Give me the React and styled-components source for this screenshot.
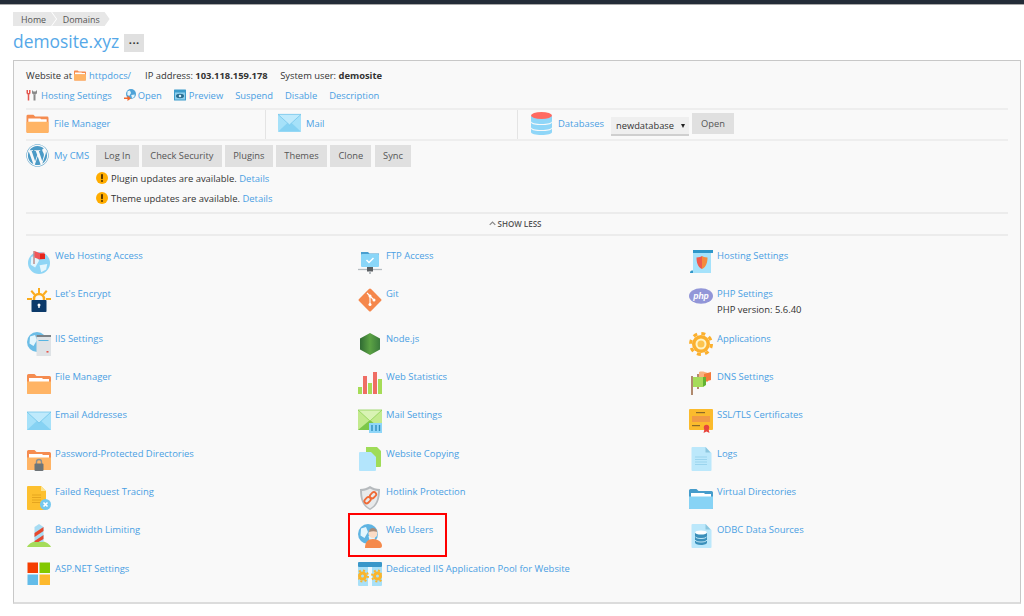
import React from "react";
import styled, { createGlobalStyle } from "styled-components";
import { FaWordpress } from "react-icons/fa";

const Global = createGlobalStyle`
  html, body { margin: 0; padding: 0; background: #fff; }
  body { font-family: "Open Sans", "Liberation Sans", sans-serif; font-size: 9.45px; color: #333; }
  * { box-sizing: border-box; }
`;

const TopBar = styled.div`height: 5px; background: #232c38; border-bottom: 1px solid #a9a9a9;`;
const Page = styled.div`padding: 7px 3px 15px 13px;`;
const Crumbs = styled.nav`display: flex; height: 14px;`;
const Crumb = styled.a`
  display: flex; align-items: center; height: 14px; background: #e7e7e7; color: #555; font-size: 8.9px;
  padding: 0 10px 0 ${p => (p.$first ? "8px" : "10.7px")};
  margin-left: ${p => (p.$first ? "0" : "-4px")};
  clip-path: ${p => p.$first
    ? "polygon(0 0, calc(100% - 5px) 0, 100% 50%, calc(100% - 5px) 100%, 0 100%)"
    : "polygon(0 0, calc(100% - 5px) 0, 100% 50%, calc(100% - 5px) 100%, 0 100%, 5px 50%)"};
`;
const TitleRow = styled.div`display: flex; align-items: center; gap: 5px; height: 26px; margin-top: 2px; margin-bottom: 6px;`;
const Title = styled.h1`margin: 0; font-size: 17.4px; font-weight: 400; line-height: 26px; color: #55a8e8;`;
const MoreButton = styled.button`
  width: 20px; height: 18px; margin-top: 3px; padding: 0; border: 0; background: #e0e0e0; color: #333;
  font: 700 11px/17px "Open Sans", sans-serif; letter-spacing: .4px;
`;
const Panel = styled.section`
  width: 1008px; border: 1px solid #c8c8c8; border-bottom: 2px solid #dcdcdc; background: #f9f9f9; padding: 6px 12px 1px;
`;
const InfoRow = styled.div`display: flex; align-items: center; height: 16px; font-size: 9.4px;`;
const InfoItem = styled.span`display: inline-flex; align-items: center; margin-right: ${p => p.$mr || 12.5}px; white-space: pre;`;
const FolderSlot = styled.span`display: inline-flex; margin: 0 3px 0 2px;`;
const Strong = styled.b`font-weight: 700; color: #333;`;
const Link = styled.a`color: #4a9fe3; white-space: nowrap;`;
const LinksRow = styled.div`display: flex; align-items: center; gap: 12px; height: 20px; margin-top: 2px; margin-bottom: 2.5px; font-size: 9.38px;`;
const IconLink = styled.span`display: inline-flex; align-items: center; gap: ${p => p.$gap || 3}px;`;
const Toolbar = styled.div`
  display: grid; grid-template-columns: 240px 252px 1fr; height: 33.5px;
  border-top: 2px solid #eeeeee; border-bottom: 2px solid #eeeeee;
`;
const ToolCell = styled.div`
  display: flex; align-items: center; gap: ${p => (p.$last ? 6 : 5)}px; padding: 0 0 2px ${p => (p.$first ? "0" : p.$last ? "13px" : "12px")};
  border-right: ${p => (p.$last ? "0" : "1px solid #e4e4e4")};
`;
const DbSelect = styled.div`
  display: flex; align-items: center; justify-content: space-between; width: 78px; height: 19px; margin: 7px -3px 0 1px; padding: 0 4px 0 5px;
  background: #efefef; border-bottom: 2px solid #cfcfcf; color: #333; font-size: 9.3px;
`;
const Arrow = styled.span`width: 0; height: 0; border-left: 2.5px solid transparent; border-right: 2.5px solid transparent; border-top: 4px solid #222;`;
const Button = styled.button`
  height: 21.5px; padding: 0 ${p => p.$pad || 8.2}px; border: 0; background: #e0e0e0; color: #555;
  font: 400 9.3px "Open Sans", sans-serif; white-space: nowrap;
`;
const CmsRow = styled.div`display: flex; gap: 7px; padding-top: 3px; height: 71px;`;
const CmsHead = styled.div`display: flex; gap: 5px; width: 63px;`;
const CmsLabel = styled.div`margin-top: 5px; line-height: 14px; white-space: nowrap;`;
const CmsBody = styled.div`display: flex; flex-direction: column;`;
const ButtonRow = styled.div`display: flex; gap: 3.5px; margin-top: 1px;`;
const Notice = styled.div`display: flex; align-items: center; gap: 3px; height: 14px; margin-top: ${p => (p.$first ? "4.5px" : "6px")}; white-space: pre;`;
const ShowLess = styled.div`
  display: flex; align-items: center; justify-content: center; gap: 2px; height: 23.5px; padding-right: 4px;
  border-top: 2px solid #ececec; border-bottom: 2px solid #ececec;
  font-size: 8px; font-weight: 600; color: #555; text-transform: uppercase;
`;
const Grid = styled.div`
  display: grid; grid-template-columns: 331px 331px 1fr; padding: 14px 0 0 1px;
`;
const Item = styled.div`position: relative; display: flex; gap: 4px; padding-bottom: 14.35px;`;
const ItemText = styled.div`line-height: 14px; margin-top: -0.5px;`;
const ItemNote = styled.div`margin: 2px 0 .5px; color: #333;`;
const Highlight = styled.div`
  position: absolute; left: -10px; top: -11px; width: 99px; height: 44px; border: 2px solid #f00; pointer-events: none;
`;
const Svg = styled.svg`display: block; flex: none;`;

const Ic = ({ s = 24, w, h, vb = "0 0 24 24", children }) => (
  <Svg width={w || s} height={h || s} viewBox={vb}>{children}</Svg>
);

const FolderArt = ({ back = "#f58c50", front = "#ffb465", children }) => (
  <>
    <path d="M0 4.500a1.500 1.500 0 0 1 1.500-1.500h6l2 2h13a1.500 1.500 0 0 1 1.500 1.500v15a1.500 1.500 0 0 1-1.500 1.500h-21A1.500 1.500 0 0 1 0 21.500z" fill={back} />
    <path d="M2 7h13l1 1h6v3H2z" fill="#fff" />
    <path d="M0 10.500h24v11a1.500 1.500 0 0 1-1.500 1.500h-21A1.500 1.500 0 0 1 0 21.500z" fill={front} />
    {children}
  </>
);
const Globe = ({ cx = 12, cy = 12, r = 11.5, fill = "#8fd5f5", land = "#e4f6fd" }) => (
  <>
    <circle cx={cx} cy={cy} r={r} fill={fill} />
    <path d={`M${cx - r * 0.7} ${cy - r * 0.55}l${r * 0.5} ${-r * 0.15}l${r * 0.2} ${r * 0.5}l${-r * 0.35} ${r * 0.6}l${-r * 0.4} ${-r * 0.25}z M${cx + r * 0.05} ${cy + r * 0.2}l${r * 0.7} ${-r * 0.1}l${-r * 0.1} ${r * 0.5}l${-r * 0.45} ${r * 0.25}z`} fill={land} />
  </>
);
const DocArt = ({ fill = "#bce8fb", fold = "#8cc6de", x = 2.5, w = 19 }) => (
  <>
    <path d={`M${x + 1} 0h${w - 6}l6 6v${17}a1 1 0 0 1-1 1H${x + 1}a1 1 0 0 1-1-1V1a1 1 0 0 1 1-1z`} fill={fill} />
    <path d={`M${x + w - 5} 0l5 5.500h-5z`} fill={fold} />
  </>
);

const MailArt = () => (
  <>
    <rect y="3" width="24" height="18" fill="#a6e1f9" />
    <path d="M0 21l12-11 12 11z" fill="#86d2f3" />
    <path d="M0 3l12 11L24 3z" fill="#bfeafc" stroke="#74c6ea" strokeWidth=".8" />
  </>
);

const I = {
  folder: <Ic><FolderArt /></Ic>,
  folderTop: <Ic w={23} h={22}><FolderArt /></Ic>,
  folderSmall: <Ic w={12} h={12}><FolderArt /></Ic>,
  mail: <Ic w={23} h={20} vb="0 2 24 20"><MailArt /></Ic>,
  mailGrid: <Ic><MailArt /></Ic>,
  db: (
    <Ic w={21} h={23} vb="0 0 21 23">
      <path d="M0 4h21v5c0 2-4.500 3-10.500 3S0 11 0 9z" fill="#8fd6f8" />
      <path d="M0 10.500c1 2 5 2.500 10.500 2.500S20 12.500 21 10.500V15c0 2-4.500 3-10.500 3S0 17 0 15z" fill="#8fd6f8" />
      <path d="M0 16.500c1 2 5 2.500 10.500 2.500S20 18.500 21 16.500V20c0 2-4.500 3-10.500 3S0 22 0 20z" fill="#8fd6f8" />
      <ellipse cx="10.500" cy="3.500" rx="10.500" ry="3.500" fill="#ff6a61" />
    </Ic>
  ),
  warn: (
    <Ic s={12}>
      <circle cx="12" cy="12" r="12" fill="#ffad00" />
      <rect x="10" y="4" width="4" height="10.500" rx="1.500" fill="#5b3a00" />
      <circle cx="12" cy="18" r="2.200" fill="#5b3a00" />
    </Ic>
  ),
  tools: (
    <Ic s={12}>
      <path d="M5 10v13M2.500 2v6c0 2 5 2 5 0V2" fill="none" stroke="#e4574f" strokeWidth="3" />
      <path d="M17 11v12" stroke="#8a8a8a" strokeWidth="4" />
      <path d="M12 2v5c0 3 2 4 5 4s5-1 5-4V2l-3 3h-4z" fill="#8a8a8a" />
    </Ic>
  ),
  open: (
    <Ic s={12}>
      <Globe cx={14} cy={10} r={10} fill="#4fa3d8" />
      <path d="M0 17h7v-4l7 6-7 5v-4H0z" fill="#f4682c" />
    </Ic>
  ),
  preview: (
    <Ic s={12}>
      <rect y="1" width="24" height="22" rx="1" fill="#3d9ccb" />
      <rect x="2" y="7" width="20" height="14" fill="#8fd0ee" />
      <ellipse cx="12" cy="14" rx="8" ry="4.500" fill="#2b6d8f" />
      <circle cx="12" cy="14" r="2.500" fill="#d9f2fc" />
    </Ic>
  ),
  hostAccess: (
    <Ic>
      <Globe cy={13} r={11} />
      <path d="M7 1v13" stroke="#b98a86" strokeWidth="1.400" />
      <path d="M7.500 1l5 2 5-.5v6.500l-5 .5-5-2z" fill="#f0575a" />
      <path d="M13 4h5v5h-5z" fill="#e5261c" />
    </Ic>
  ),
  encrypt: (
    <Ic>
      <path d="M11 0h2v5h-2zM3.500 3.500l1.500-1.500 3.500 4-1.500 1.500zM20.500 3.500L19 2l-3.500 4 1.500 1.500zM0 10h5v2H0zM19 10h5v2h-5z" fill="#fbab1c" />
      <path d="M7 13V11a5 5 0 0 1 10 0v2" fill="none" stroke="#fbab1c" strokeWidth="2.500" />
      <rect x="4.500" y="12" width="15" height="12" rx=".8" fill="#0c3a6a" />
      <circle cx="12" cy="17" r="1.500" fill="#fff" />
      <rect x="11.300" y="17" width="1.400" height="3" fill="#fff" />
    </Ic>
  ),
  iis: (
    <Ic>
      <Globe cx={10} cy={10} r={10} fill="#6cbde6" />
      <rect x="9.500" y="3" width="14.500" height="21" fill="#dfe3e6" />
      <rect x="9.500" y="3" width="14.500" height="2" fill="#7b8186" />
      <rect x="11.500" y="8" width="10" height="1" fill="#57b5e2" />
      <rect x="19.500" y="19" width="2" height="1.600" fill="#e8564c" />
    </Ic>
  ),
  ftp: (
    <Ic>
      <path d="M3 2h7l1.500 1.500H21v2H3z" fill="#4a9fd0" />
      <rect x="3" y="4" width="18" height="13" rx="1" fill="#8ad6f8" />
      <path d="M8.500 10l2.500 2.500L15.500 8" fill="none" stroke="#fff" strokeWidth="1.500" />
      <path d="M0 19.500h24" stroke="#b5bcc0" strokeWidth="1.300" />
      <rect x="9" y="17" width="6" height="4.500" fill="#5b5f62" />
      <rect x="11" y="21.500" width="2" height="2.500" fill="#b5bcc0" />
    </Ic>
  ),
  git: (
    <Ic>
      <rect x="3.500" y="3.500" width="17" height="17" rx="1.500" transform="rotate(45 12 12)" fill="#f5874b" />
      <path d="M9 5l6 6M12 8v8.500M12 8l4 4" fill="none" stroke="#fff" strokeWidth="1.100" />
      <circle cx="12" cy="8" r="1.500" fill="#fff" /><circle cx="12" cy="16.500" r="1.500" fill="#fff" /><circle cx="16" cy="12" r="1.500" fill="#fff" />
    </Ic>
  ),
  node: (
    <Ic>
      <defs>
        <linearGradient id="n" x1="0" x2="1"><stop offset="0" stopColor="#2f6a33" /><stop offset=".5" stopColor="#5ca344" /><stop offset="1" stopColor="#3a7a3c" /></linearGradient>
      </defs>
      <path d="M12 1l10 5.500v11L12 23 2 17.500v-11z" fill="url(#n)" />
    </Ic>
  ),
  stats: (
    <Ic>
      <rect y="16" width="4" height="7" fill="#a6dc57" />
      <rect x="5" y="5" width="4" height="18" fill="#ef6d64" />
      <rect x="10" y="12" width="4" height="11" fill="#a6dc57" />
      <rect x="15" y="1" width="4" height="22" fill="#ef6d64" />
      <rect x="20" y="8" width="4" height="15" fill="#a6dc57" />
    </Ic>
  ),
  hostingDoc: (
    <Ic>
      <rect x="4" y="1" width="18" height="22" fill="#a5e2fb" />
      <rect x="4" y="0" width="20" height="3" fill="#2f97c9" />
      <path d="M1 23c0-2 1-2.500 3-2.500V23z" fill="#2f97c9" />
      <path d="M7.500 7.500c3 0 4.500-1 5.500-1.500v13C9 17 7.500 13 7.500 7.500z" fill="#f05a4c" />
      <path d="M13 6c1 .5 2.500 1.500 5.500 1.500 0 5.500-1.500 9.500-5.500 11.500z" fill="#f58a3c" />
    </Ic>
  ),
  php: (
    <Ic h={16} w={24} vb="0 0 24 16">
      <ellipse cx="12" cy="8" rx="12" ry="7.800" fill="#9296d8" />
      <text x="12" y="11" textAnchor="middle" fontFamily="Liberation Sans, sans-serif" fontStyle="italic" fontWeight="700" fontSize="8.500" fill="#fff">php</text>
    </Ic>
  ),
  apps: (
    <Ic>
      <circle cx="12" cy="12" r="9" fill="#fbb02e" />
      <circle cx="12" cy="12" r="10.500" fill="none" stroke="#fbb02e" strokeWidth="3" strokeDasharray="4 4.250" />
      <circle cx="12" cy="12" r="5.500" fill="#fff3c4" />
      <circle cx="12" cy="12" r="3.500" fill="#fdc44e" />
    </Ic>
  ),
  dns: (
    <Ic>
      <rect x="2" y="5" width="2" height="19" fill="#b08a6e" />
      <rect x="8" y="3" width="2" height="15" fill="#b08a6e" />
      <path d="M10 1c3-1 6 0 9 1v9c-3-1-6-1-9 0z" fill="#f9b27f" />
      <path d="M15 3l7-2v8l-7 2z" fill="#f47a3a" />
      <path d="M4 6h10v10H4z" fill="#a5dc5a" />
      <path d="M14 6h3v8l-3 2z" fill="#62b233" />
    </Ic>
  ),
  ssl: (
    <Ic>
      <rect width="24" height="21" rx="1" fill="#fbbb2d" />
      <rect x="3" y="7" width="18" height="6" fill="#f19a44" />
      <rect x="7" y="3" width="9" height="1.200" fill="#8a6a2a" />
      <rect x="3" y="16" width="8" height="1.200" fill="#8a6a2a" />
      <circle cx="17.500" cy="18.500" r="2.700" fill="#e8453c" />
      <path d="M15.500 20l-1 4 3-1.500 3 1.500-1-4z" fill="#e8453c" />
    </Ic>
  ),
  logs: (
    <Ic>
      <DocArt />
      <path d="M6 10h12M6 12.500h12M6 15h12M6 17.500h12" stroke="#9ad4ee" strokeWidth="1.100" />
    </Ic>
  ),
  copying: (
    <Ic>
      <path d="M8 0h11l4 4v15a1 1 0 0 1-1 1H8z" fill="#9fdc58" />
      <path d="M2 5h11l5 5v13a1 1 0 0 1-1 1H2a1 1 0 0 1-1-1V6a1 1 0 0 1 1-1z" fill="#b3e5fc" />
    </Ic>
  ),
  passFolder: (
    <Ic>
      <FolderArt>
        <path d="M9.500 17v-2a2.500 2.500 0 0 1 5 0v2" fill="none" stroke="#8a8f93" strokeWidth="1.400" />
        <rect x="7.500" y="16.500" width="9" height="7.500" rx="1" fill="#6e7478" />
      </FolderArt>
    </Ic>
  ),
  hotlink: (
    <Ic>
      <path d="M12 0c3 2 6 3 10 3 0 10-2 17-10 21C4 20 2 13 2 3c4 0 7-1 10-3z" fill="#b6babd" />
      <path d="M12 2.500c2.500 1.500 5 2.500 8 2.500 0 8-2 14-8 17.500C6 19 4 13 4 5c3 0 5.500-1 8-2.500z" fill="#e8eaeb" />
      <g fill="none" stroke="#ef6a35" strokeWidth="1.800">
        <rect x="6" y="12" width="7" height="4.500" rx="2.200" transform="rotate(-45 9.500 14.200)" />
        <rect x="11.500" y="7" width="7" height="4.500" rx="2.200" transform="rotate(-45 15 9.200)" />
      </g>
    </Ic>
  ),
  failed: (
    <Ic>
      <path d="M1 0h13l5 5v18a1 1 0 0 1-1 1H1a1 1 0 0 1-1-1V1a1 1 0 0 1 1-1z" fill="#fdc02f" />
      <path d="M14 0l5 5h-5z" fill="#fde38a" />
      <path d="M5 9h9M5 11.500h9M5 14h9M5 16.500h9" stroke="#e5a51f" strokeWidth="1.100" />
      <circle cx="18.500" cy="18.500" r="5.500" fill="#74c8ef" />
      <path d="M16.500 16.500l4 4M20.500 16.500l-4 4" stroke="#fff" strokeWidth="1.600" />
    </Ic>
  ),
  bandwidth: (
    <Ic>
      <path d="M0 23c2-4 7-6 12-6s10 2 12 6z" fill="#a5dc5a" />
      <path d="M12 0l4.500 3v15h-9V3z" fill="#a7dcf3" />
      <path d="M7.500 9l9-6v4l-9 6zM7.500 17l9-6v4l-5 3h-4z" fill="#e5492f" />
    </Ic>
  ),
  vdir: <Ic><FolderArt back="#469ccb" front="#87d3f5" /></Ic>,
  webUsers: (
    <Ic>
      <Globe cx={10} cy={10} r={10} fill="#5fb4e2" />
      <circle cx="15" cy="9.500" r="4.500" fill="#fbdcc6" />
      <path d="M11 8c0-3 2-4 4-4s4 1 4 4c-2-1-5-1-8 0z" fill="#a98a76" />
      <path d="M7 24c0-6 3-9 8-9s9 3 9 7c0 1-1 2-2 2z" fill="#f58a4c" />
    </Ic>
  ),
  odbc: (
    <Ic>
      <DocArt />
      <path d="M6 8.500h12v10c0 1.500-2.500 2.500-6 2.500s-6-1-6-2.500z" fill="#3b90bb" />
      <ellipse cx="12" cy="8.500" rx="6" ry="2" fill="#fff" />
      <path d="M6 12.500c1 1.500 3 2 6 2s5-.5 6-2M6 16c1 1.500 3 2 6 2s5-.5 6-2" fill="none" stroke="#cdeefb" strokeWidth=".9" />
    </Ic>
  ),
  asp: (
    <Ic>
      <rect x=".500" y=".500" width="10.500" height="10.500" fill="#f53d00" />
      <rect x="12.500" y=".500" width="10.500" height="10.500" fill="#83c800" />
      <rect x=".500" y="12.500" width="10.500" height="10.500" fill="#63bce9" />
      <rect x="12.500" y="12.500" width="10.500" height="10.500" fill="#fdb92e" />
    </Ic>
  ),
  pool: (
    <Ic>
      <rect y="4" width="24" height="20" rx="1" fill="#a8e0f8" />
      <rect y="0" width="24" height="5" rx="1" fill="#3a97c9" />
      <rect x="10" y="5" width="4" height="19" fill="#eef9fe" />
      <circle cx="4.500" cy="14" r="3" fill="none" stroke="#fbb52b" strokeWidth="3" />
      <circle cx="19.500" cy="14" r="3" fill="none" stroke="#fbb52b" strokeWidth="3" />
      <circle cx="4.500" cy="14" r="5.500" fill="none" stroke="#fbb52b" strokeWidth="2" strokeDasharray="2 2.300" />
      <circle cx="19.500" cy="14" r="5.500" fill="none" stroke="#fbb52b" strokeWidth="2" strokeDasharray="2 2.300" />
    </Ic>
  ),
  mailSettings: (
    <Ic>
      <rect y="1" width="24" height="20" fill="#c3ea8e" />
      <path d="M0 21l12-10 12 10z" fill="#7cc74a" />
      <path d="M0 1l12 11L24 1z" fill="#d9f3b4" stroke="#8fd156" strokeWidth=".8" />
      <rect x="11" y="14" width="13" height="10" fill="#8fd6f8" />
      <path d="M14 16v6M18 16v6M21.500 16v6" stroke="#2f8fbe" strokeWidth="1.400" />
    </Ic>
  ),
};

const items = [
  [I.hostAccess, "Web Hosting Access"], [I.ftp, "FTP Access"], [I.hostingDoc, "Hosting Settings"],
  [I.encrypt, "Let's Encrypt"], [I.git, "Git"], [I.php, "PHP Settings", "PHP version: 5.6.40"],
  [I.iis, "IIS Settings"], [I.node, "Node.js"], [I.apps, "Applications"],
  [I.folder, "File Manager"], [I.stats, "Web Statistics"], [I.dns, "DNS Settings"],
  [I.mailGrid, "Email Addresses"], [I.mailSettings, "Mail Settings"], [I.ssl, "SSL/TLS Certificates"],
  [I.passFolder, "Password-Protected Directories"], [I.copying, "Website Copying"], [I.logs, "Logs"],
  [I.failed, "Failed Request Tracing"], [I.hotlink, "Hotlink Protection"], [I.vdir, "Virtual Directories"],
  [I.bandwidth, "Bandwidth Limiting"], [I.webUsers, "Web Users", null, true], [I.odbc, "ODBC Data Sources"],
  [I.asp, "ASP.NET Settings"], [I.pool, "Dedicated IIS Application Pool for Website"],
];

export default function App() {
  return (
    <>
      <Global />
      <TopBar />
      <Page>
        <Crumbs>
          <Crumb $first>Home</Crumb>
          <Crumb>Domains</Crumb>
        </Crumbs>
        <TitleRow>
          <Title>demosite.xyz</Title>
          <MoreButton>···</MoreButton>
        </TitleRow>
        <Panel>
          <InfoRow>
            <InfoItem $mr={14}>Website at<FolderSlot>{I.folderSmall}</FolderSlot><Link>httpdocs/</Link></InfoItem>
            <InfoItem>IP address: <Strong>103.118.159.178</Strong></InfoItem>
            <InfoItem>System user: <Strong>demosite</Strong></InfoItem>
          </InfoRow>
          <LinksRow>
            <IconLink>{I.tools}<Link>Hosting Settings</Link></IconLink>
            <IconLink $gap={2}>{I.open}<Link>Open</Link></IconLink>
            <IconLink>{I.preview}<Link>Preview</Link></IconLink>
            <Link>Suspend</Link>
            <Link>Disable</Link>
            <Link>Description</Link>
          </LinksRow>
          <Toolbar>
            <ToolCell $first>{I.folderTop}<Link>File Manager</Link></ToolCell>
            <ToolCell>{I.mail}<Link>Mail</Link></ToolCell>
            <ToolCell $last>
              {I.db}<Link>Databases</Link>
              <DbSelect>newdatabase<Arrow /></DbSelect>
              <Button $pad={9}>Open</Button>
            </ToolCell>
          </Toolbar>
          <CmsRow>
            <CmsHead>
              <FaWordpress size={23} color="#4b9ac6" style={{ flex: "none" }} />
              <CmsLabel><Link>My CMS</Link></CmsLabel>
            </CmsHead>
            <CmsBody>
              <ButtonRow>
                <Button>Log In</Button>
                <Button>Check Security</Button>
                <Button>Plugins</Button>
                <Button>Themes</Button>
                <Button>Clone</Button>
                <Button>Sync</Button>
              </ButtonRow>
              <Notice $first>{I.warn}<span>Plugin updates are available. <Link>Details</Link></span></Notice>
              <Notice>{I.warn}<span>Theme updates are available. <Link>Details</Link></span></Notice>
            </CmsBody>
          </CmsRow>
          <ShowLess>
            <Ic s={7} vb="0 0 10 10"><path d="M1 7l4-4 4 4" fill="none" stroke="#8a8a8a" strokeWidth="1.800" /></Ic>
            Show less
          </ShowLess>
          <Grid>
            {items.map(([icon, label, note, mark]) => (
              <Item key={label + (note || "")}>
                {mark && <Highlight />}
                {icon}
                <ItemText>
                  <Link>{label}</Link>
                  {note && <ItemNote>{note}</ItemNote>}
                </ItemText>
              </Item>
            ))}
          </Grid>
        </Panel>
      </Page>
    </>
  );
}
